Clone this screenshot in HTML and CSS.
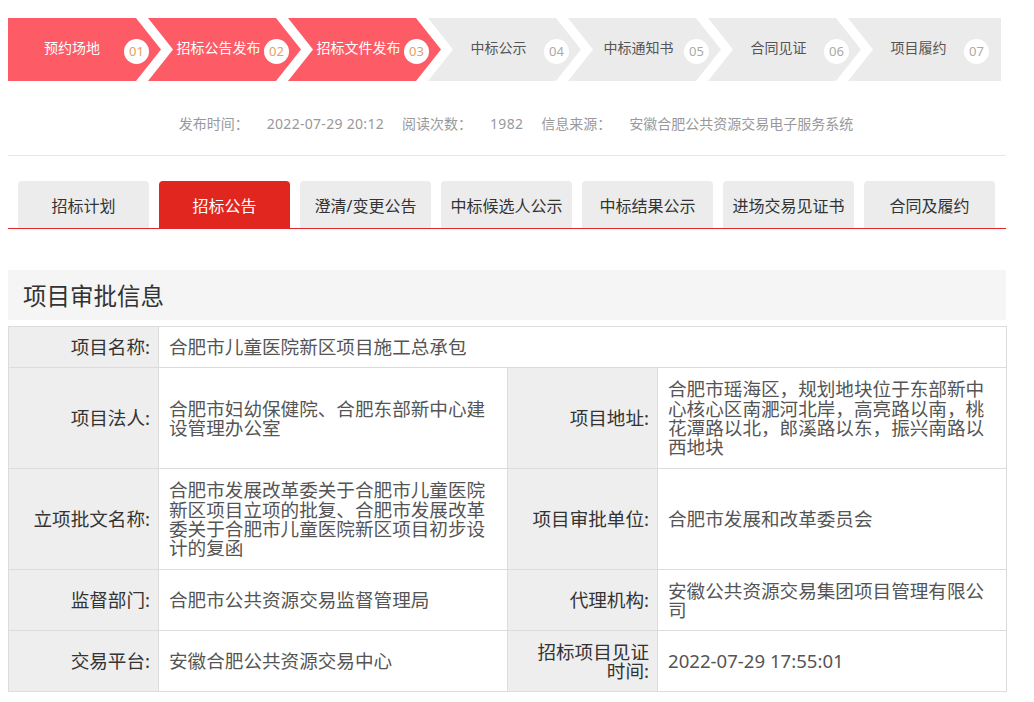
FILE: index.html
```html
<!DOCTYPE html>
<html lang="zh-CN">
<head>
<meta charset="utf-8">
<title>项目审批信息</title>
<link rel="stylesheet" href="styles.css">
</head>
<body>
<div class="page">
  <div class="steps">
    <div class="step done first"><span class="step-label">预约场地</span><span class="step-num">01</span></div>
    <div class="step done"><span class="step-label">招标公告发布</span><span class="step-num">02</span></div>
    <div class="step done"><span class="step-label">招标文件发布</span><span class="step-num">03</span></div>
    <div class="step"><span class="step-label">中标公示</span><span class="step-num">04</span></div>
    <div class="step"><span class="step-label">中标通知书</span><span class="step-num">05</span></div>
    <div class="step"><span class="step-label">合同见证</span><span class="step-num">06</span></div>
    <div class="step last"><span class="step-label">项目履约</span><span class="step-num">07</span></div>
  </div>

  <div class="meta">
    <span class="meta-item">发布时间：</span><span class="meta-item meta-value">2022-07-29 20:12</span><span class="meta-item">阅读次数：</span><span class="meta-item meta-value">1982</span><span class="meta-item">信息来源：</span><span class="meta-item">安徽合肥公共资源交易电子服务系统</span>
  </div>

  <div class="tabs">
    <div class="tab">招标计划</div>
    <div class="tab active">招标公告</div>
    <div class="tab">澄清/变更公告</div>
    <div class="tab">中标候选人公示</div>
    <div class="tab">中标结果公示</div>
    <div class="tab">进场交易见证书</div>
    <div class="tab">合同及履约</div>
  </div>

  <div class="section-title">项目审批信息</div>

  <table class="info">
    <colgroup>
      <col class="c-label"><col class="c-value"><col class="c-label"><col class="c-value">
    </colgroup>
    <tr class="r-short">
      <th>项目名称:</th>
      <td colspan="3">合肥市儿童医院新区项目施工总承包</td>
    </tr>
    <tr class="r-tall">
      <th>项目法人:</th>
      <td>合肥市妇幼保健院、合肥东部新中心建设管理办公室</td>
      <th>项目地址:</th>
      <td>合肥市瑶海区，规划地块位于东部新中心核心区南淝河北岸，高亮路以南，桃花潭路以北，郎溪路以东，振兴南路以西地块</td>
    </tr>
    <tr class="r-tall">
      <th>立项批文名称:</th>
      <td>合肥市发展改革委关于合肥市儿童医院新区项目立项的批复、合肥市发展改革委关于合肥市儿童医院新区项目初步设计的复函</td>
      <th>项目审批单位:</th>
      <td>合肥市发展和改革委员会</td>
    </tr>
    <tr class="r-mid">
      <th>监督部门:</th>
      <td>合肥市公共资源交易监督管理局</td>
      <th>代理机构:</th>
      <td>安徽公共资源交易集团项目管理有限公司</td>
    </tr>
    <tr class="r-mid">
      <th>交易平台:</th>
      <td>安徽合肥公共资源交易中心</td>
      <th>招标项目见证时间:</th>
      <td>2022-07-29 17:55:01</td>
    </tr>
  </table>
</div>
</body>
</html>
```

FILE: styles.css
```css
html, body {
  background: #fff;
}
body {
  margin: 8px 8px 0;
  font-family: "Noto Sans", "Noto Sans CJK SC", sans-serif;
  color: #333;
}
.page {
  width: 998px;
  padding-top: 10px;
}

/* steps */
.steps {
  display: flex;
  height: 63px;
}
.step {
  width: 153px;
  flex: none;
  height: 63px;
  box-sizing: border-box;
  margin-left: -13px;
  padding: 0 12px 0 25px;
  display: flex;
  align-items: center;
  background: #ebebeb;
  color: #555;
  font-size: 14px;
  clip-path: polygon(0 0, calc(100% - 25px) 0, 100% 50%, calc(100% - 25px) 100%, 0 100%, 25px 50%);
}
.step.first {
  margin-left: 0;
  padding-left: 12px;
  clip-path: polygon(0 0, calc(100% - 25px) 0, 100% 50%, calc(100% - 25px) 100%, 0 100%);
}
.step.last {
  clip-path: polygon(0 0, 100% 0, 100% 100%, 0 100%, 25px 50%);
}
.step.done {
  background: #fd5b66;
  color: #fff;
}
.step-label {
  flex: 1;
  text-align: center;
  white-space: nowrap;
  line-height: 20px;
  margin-bottom: 3px;
}
.step-num {
  flex: none;
  width: 25px;
  height: 25px;
  border-radius: 50%;
  background: #fff;
  color: #aaa;
  font-size: 13px;
  line-height: 25px;
  text-align: center;
  margin-top: 3px;
}
.step.done .step-num {
  color: #e3a264;
}

/* meta */
.meta {
  padding-top: 12px;
  height: 62px;
  border-bottom: 1px solid #e6e6e6;
  display: flex;
  justify-content: center;
  align-items: center;
  font-size: 14px;
  color: #999;
  line-height: 20px;
}
.meta-item {
  margin-left: 18px;
  white-space: nowrap;
}
.meta-value {
  letter-spacing: 0.3px;
}

/* tabs */
.tabs {
  margin-top: 25px;
  display: flex;
  padding-left: 10px;
  border-bottom: 1px solid #e0262a;
}
.tab {
  width: 131px;
  height: 47px;
  margin-right: 10px;
  border-radius: 4px 4px 0 0;
  background: #ececec;
  color: #333;
  font-size: 16px;
  display: flex;
  align-items: center;
  justify-content: center;
  white-space: nowrap;
}
.tab.active {
  background: #e1261f;
  color: #fff;
}

/* section */
.section-title {
  margin-top: 41px;
  height: 50px;
  background: #f5f5f5;
  padding-left: 15px;
  font-size: 23.5px;
  color: #333;
  display: flex;
  align-items: center;
}

/* table */
.info {
  margin-top: 6px;
  width: 997px;
  border-collapse: collapse;
  table-layout: fixed;
  font-size: 18.6px;
  line-height: 19.3px;
}
.c-label { width: 150px; }
.c-value { width: 349px; }
.info th,
.info td {
  border: 1px solid #dcdcdc;
  vertical-align: middle;
  padding-top: 0;
  padding-bottom: 0;
}
.info th {
  background: #eeeeee;
  font-weight: normal;
  color: #333;
  text-align: right;
  padding-left: 14px;
  padding-right: 8px;
}
.info td {
  background: #fff;
  color: #555;
  text-align: left;
  padding-left: 10px;
  padding-right: 10px;
}
.r-short th, .r-short td { height: 40px; }
.r-tall th, .r-tall td { height: 100px; }
.r-mid th, .r-mid td { height: 60px; }
```
